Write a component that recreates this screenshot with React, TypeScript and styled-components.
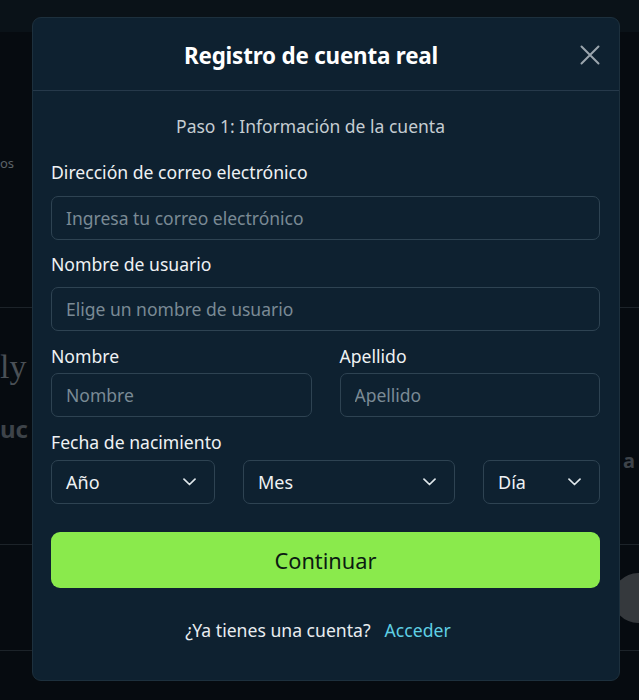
import React from "react";
import styled, { createGlobalStyle } from "styled-components";

const Global = createGlobalStyle`
  html, body { margin: 0; padding: 0; background: #060b10; }
  body { font-family: "Noto Sans", "Open Sans", sans-serif; overflow: hidden; }
  * { box-sizing: border-box; }
`;

const Page = styled.div`
  position: relative;
  width: 639px;
  height: 700px;
  overflow: hidden;
  background: #060b10;
  display: flex;
  flex-direction: column;
`;

const TopBar = styled.div`
  height: 32px;
  background: #0a1218;
  flex: none;
`;

const BgRow = styled.div<{ $h: number; $line?: boolean; $align?: string }>`
  height: ${(p) => p.$h}px;
  flex: none;
  border-bottom: ${(p) => (p.$line ? "1px solid #1c2329" : "none")};
  display: flex;
  align-items: ${(p) => p.$align ?? "center"};
  justify-content: space-between;
  padding-right: 4px;
`;

const BgText = styled.span<{ $size: number; $color: string; $weight?: number; $serif?: boolean; $top?: number }>`
  font-size: ${(p) => p.$size}px;
  line-height: 1.1;
  color: ${(p) => p.$color};
  font-weight: ${(p) => p.$weight ?? 400};
  font-family: ${(p) => (p.$serif ? '"Liberation Serif", serif' : '"Noto Sans", sans-serif')};
  margin-top: ${(p) => p.$top ?? 0}px;
  white-space: nowrap;
`;

const BgCircle = styled.span`
  flex: none;
  width: 50px;
  height: 50px;
  border-radius: 50%;
  background: #35393d;
  margin-right: -28px;
`;

const Modal = styled.div`
  position: absolute;
  left: 32px;
  top: 17px;
  width: 588px;
  height: 664px;
  background: #0e2130;
  border: 1px solid #1d303d;
  border-radius: 9px;
  display: flex;
  flex-direction: column;
`;

const Header = styled.div`
  position: relative;
  height: 73px;
  border-bottom: 1px solid #26394a;
  display: flex;
  align-items: center;
  justify-content: center;
  padding-right: 30px;
  flex: none;
`;

const Title = styled.h2`
  margin: 2px 0 0;
  font-size: 22.4px;
  font-weight: 700;
  color: #ffffff;
  letter-spacing: -0.2px;
`;

const CloseBtn = styled.button`
  position: absolute;
  right: 18px;
  top: 26px;
  width: 22px;
  height: 22px;
  padding: 0;
  border: 0;
  background: transparent;
  display: flex;
  align-items: center;
  justify-content: center;
  cursor: pointer;
`;

const Body = styled.div`
  padding: 24px 19px 0 18px;
  display: flex;
  flex-direction: column;
`;

const Step = styled.p`
  margin: 0 0 23px;
  padding-right: 30px;
  text-align: center;
  font-size: 17.5px;
  line-height: 22px;
  color: #c5cdd2;
`;

const Field = styled.div<{ $mb?: number }>`
  display: flex;
  flex-direction: column;
  margin-bottom: ${(p) => p.$mb ?? 12}px;
  min-width: 0;
`;

const Label = styled.label<{ $gap: number }>`
  font-size: 17.6px;
  line-height: 24px;
  color: #eef2f4;
  margin-bottom: ${(p) => p.$gap}px;
`;

const Input = styled.input`
  height: 44px;
  width: 100%;
  border: 1px solid #2e4352;
  border-radius: 7px;
  background: transparent;
  padding: 0 14px;
  font-family: inherit;
  font-size: 17.5px;
  color: #eef2f4;
  outline: none;
  &::placeholder { color: #7a8a95; }
`;

const Row = styled.div<{ $cols: string; $mb?: number }>`
  display: grid;
  grid-template-columns: ${(p) => p.$cols};
  column-gap: 28px;
  margin-bottom: ${(p) => p.$mb ?? 0}px;
`;

const Select = styled.div`
  height: 44px;
  border: 1px solid #2e4352;
  border-radius: 7px;
  display: flex;
  align-items: center;
  justify-content: space-between;
  padding: 0 18px 0 14px;
  font-size: 18px;
  color: #eef2f4;
`;

const PrimaryButton = styled.button`
  margin-top: 28px;
  height: 56px;
  width: 100%;
  border: 0;
  border-radius: 9px;
  background: #8aea4c;
  color: #0c1a12;
  font-family: inherit;
  font-size: 21.8px;
  cursor: pointer;
`;

const Footer = styled.p`
  margin: 31px 0 0;
  padding-right: 15px;
  text-align: center;
  font-size: 17.6px;
  line-height: 22px;
  color: #e8edf0;
`;

const Link = styled.a`
  color: #5fd0e4;
  margin-left: 14px;
  text-decoration: none;
`;

const Chevron = () => (
  <svg width="13" height="8" viewBox="0 0 13 8" fill="none">
    <path d="M1 1.2l5.5 5.3L12 1.2" stroke="#dfe6ea" strokeWidth="1.7" strokeLinecap="round" strokeLinejoin="round" />
  </svg>
);

const DateSelect = ({ label }: { label: string }) => (
  <Select>
    <span>{label}</span>
    <Chevron />
  </Select>
);

export default function App() {
  return (
    <>
      <Global />
      <Page>
        <TopBar />
        <BgRow $h={276} $line $align="flex-start">
          <BgText $size={13} $color="#5b6268" $top={124}>
            os
          </BgText>
        </BgRow>
        <BgRow $h={100}>
          <BgText $size={34} $color="#4a5056" $serif $top={18}>
            ly
          </BgText>
        </BgRow>
        <BgRow $h={64} $align="flex-start">
          <BgText $size={24} $color="#3d4349" $weight={700} $top={8}>
            uc
          </BgText>
          <BgText $size={20} $color="#3d4349" $weight={700} $top={42}>
            a
          </BgText>
        </BgRow>
        <BgRow $h={73} $line />
        <BgRow $h={106} $line>
          <span />
          <BgCircle />
        </BgRow>
        <Modal>
          <Header>
            <Title>Registro de cuenta real</Title>
            <CloseBtn aria-label="Cerrar">
              <svg width="20" height="20" viewBox="0 0 20 20" fill="none">
                <path d="M1.5 1.5l17 17M18.5 1.5l-17 17" stroke="#9ba6ae" strokeWidth="2" strokeLinecap="round" />
              </svg>
            </CloseBtn>
          </Header>
          <Body>
            <Step>Paso 1: Información de la cuenta</Step>
            <Field>
              <Label $gap={12}>Dirección de correo electrónico</Label>
              <Input placeholder="Ingresa tu correo electrónico" />
            </Field>
            <Field $mb={13}>
              <Label $gap={11}>Nombre de usuario</Label>
              <Input placeholder="Elige un nombre de usuario" />
            </Field>
            <Row $cols="1fr 1fr" $mb={13}>
              <Field $mb={0}>
                <Label $gap={5}>Nombre</Label>
                <Input placeholder="Nombre" />
              </Field>
              <Field $mb={0}>
                <Label $gap={5}>Apellido</Label>
                <Input placeholder="Apellido" />
              </Field>
            </Row>
            <Field $mb={0}>
              <Label $gap={6}>Fecha de nacimiento</Label>
              <Row $cols="164px 212px 1fr">
                <DateSelect label="Año" />
                <DateSelect label="Mes" />
                <DateSelect label="Día" />
              </Row>
            </Field>
            <PrimaryButton>Continuar</PrimaryButton>
            <Footer>
              ¿Ya tienes una cuenta?
              <Link href="#">Acceder</Link>
            </Footer>
          </Body>
        </Modal>
      </Page>
    </>
  );
}
